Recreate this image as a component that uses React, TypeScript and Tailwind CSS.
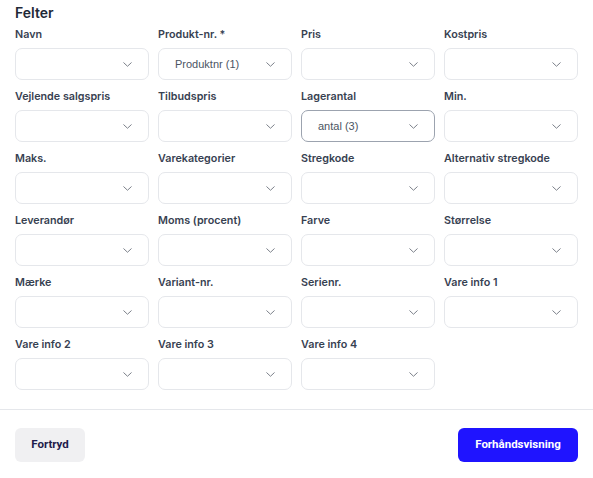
const fields: { label: string; value?: string; active?: boolean }[] = [
  { label: "Navn" },
  { label: "Produkt-nr. *", value: "Produktnr (1)" },
  { label: "Pris" },
  { label: "Kostpris" },
  { label: "Vejlende salgspris" },
  { label: "Tilbudspris" },
  { label: "Lagerantal", value: "antal (3)", active: true },
  { label: "Min." },
  { label: "Maks." },
  { label: "Varekategorier" },
  { label: "Stregkode" },
  { label: "Alternativ stregkode" },
  { label: "Leverandør" },
  { label: "Moms (procent)" },
  { label: "Farve" },
  { label: "Størrelse" },
  { label: "Mærke" },
  { label: "Variant-nr." },
  { label: "Serienr." },
  { label: "Vare info 1" },
  { label: "Vare info 2" },
  { label: "Vare info 3" },
  { label: "Vare info 4" },
];

const Chevron = () => (
  <svg width="9" height="5" viewBox="0 0 9 5" fill="none" className="shrink-0">
    <path d="M0.75 0.75l3.75 3.5 3.75-3.5" stroke="#7c808a" strokeWidth="1" strokeLinecap="round" strokeLinejoin="round" />
  </svg>
);

const Field = ({ label, value, active }: { label: string; value?: string; active?: boolean }) => (
  <div className="flex flex-col">
    <span className="text-[10.75px] leading-4 font-semibold text-[#374151] mb-[5px]">{label}</span>
    <div
      className={`h-8 rounded-[7px] border bg-white flex items-center justify-between pl-4 pr-4 ${
        active ? "border-[#9ca3af]" : "border-[#e5e7eb]"
      }`}
    >
      <span className="text-[11px] text-[#4b5563] font-['Liberation_Sans',sans-serif]">{value ?? ""}</span>
      <Chevron />
    </div>
  </div>
);

export default function App() {
  return (
    <div className="w-[593px] h-[478px] bg-white font-['Inter',sans-serif] flex flex-col overflow-hidden">
      <div className="px-[15px] pt-[3px]">
        <h2 className="text-[14px] leading-5 font-semibold text-[#1f2937]">Felter</h2>
        <div className="mt-[4px] grid grid-cols-4 gap-x-[9px] gap-y-[9px]">
          {fields.map((f) => (
            <Field key={f.label} {...f} />
          ))}
        </div>
      </div>
      <div className="mt-[19px] border-t border-[#e5e7eb]" />
      <div className="px-[15px] pt-[18px] flex items-center justify-between font-['Roboto',sans-serif]">
        <button className="h-[34px] w-[70px] rounded-md bg-[#f0f0f2] text-[11.5px] font-bold text-[#1e1b4b]">
          Fortryd
        </button>
        <button className="h-[34px] w-[120px] rounded-md bg-[#1f14ff] text-[11.5px] font-bold text-white">
          Forhåndsvisning
        </button>
      </div>
    </div>
  );
}
